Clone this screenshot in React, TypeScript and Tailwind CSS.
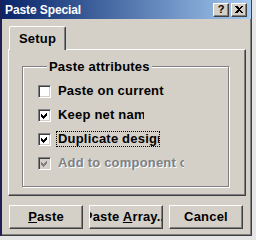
import React from 'react'

const raised =
  'border border-t-white border-l-white border-r-[#404040] border-b-[#404040] shadow-[inset_-1px_-1px_0_#808080,inset_1px_1px_0_#d4d0c8]'

function Check({ disabled }: { disabled?: boolean }) {
  return (
    <div
      className={`w-[13px] h-[13px] shrink-0 border border-t-[#808080] border-l-[#808080] border-r-white border-b-white shadow-[inset_1px_1px_0_#404040,inset_-1px_-1px_0_#d4d0c8] ${
        disabled ? 'bg-[#d4d0c8]' : 'bg-white'
      }`}
    />
  )
}

function CheckBox({
  label,
  checked,
  disabled,
  focused,
  width,
}: {
  label: string
  checked?: boolean
  disabled?: boolean
  focused?: boolean
  width?: string
}) {
  return (
    <div className="h-[24px] flex items-center gap-[6px]">
      <div className="relative w-[13px] h-[13px]">
        <Check disabled={disabled} />
        {checked && (
          <svg
            width="13"
            height="13"
            viewBox="0 0 13 13"
            className="absolute left-0 top-0"
            shapeRendering="crispEdges"
          >
            <path
              d="M3 5 L5 7 L9 3 L9 6 L5 10 L3 8 Z"
              fill={disabled ? '#808080' : '#000'}
            />
          </svg>
        )}
      </div>
      <div
        className={`whitespace-nowrap overflow-hidden text-[13px] font-bold tracking-[0.2px] leading-[14px] px-[1px] ${
          width ?? ''
        } ${
          disabled
            ? 'text-[#808080] [text-shadow:1px_1px_0_#fff]'
            : 'text-black'
        } ${focused ? 'outline outline-1 outline-dotted outline-black' : ''}`}
      >
        {label}
      </div>
    </div>
  )
}

function Button({ children }: { children: React.ReactNode }) {
  return (
    <div
      className={`w-[74px] h-[24px] flex items-center justify-center overflow-hidden whitespace-nowrap bg-[#d4d0c8] text-[13px] font-bold tracking-[0.2px] text-black ${raised}`}
    >
      <span className="shrink-0">{children}</span>
    </div>
  )
}

export default function App() {
  return (
    <div className="w-[256px] h-[240px] bg-[#e6e6e6] overflow-hidden font-['Liberation_Sans','Arial',sans-serif]">
      <div className="w-[252px] h-[236px] flex flex-col bg-[#d4d0c8] border-l-2 border-l-[#1e1e50] border-r border-b border-r-[#404040] border-b-[#404040] shadow-[inset_-1px_-1px_0_#808080]">
        {/* Title bar */}
        <div className="h-[19px] flex items-center justify-between pl-[3px] pr-[4px] bg-gradient-to-r from-[#0a246a] to-[#a6caf0]">
          <span className="text-white font-bold text-[12px] tracking-[-0.1px] leading-none">
            Paste Special
          </span>
          <div className="flex items-center gap-[2px]">
            <div className={`w-[16px] h-[14px] flex items-center justify-center bg-[#d4d0c8] text-[11px] font-bold leading-none ${raised}`}>
              ?
            </div>
            <div className={`w-[16px] h-[14px] flex items-center justify-center bg-[#d4d0c8] ${raised}`}>
              <svg width="8" height="7" viewBox="0 0 8 7" shapeRendering="crispEdges">
                <path d="M0 0h2l2 2l2-2h2l-3 3.5l3 3.5h-2l-2-2l-2 2h-2l3-3.5z" fill="#000" />
              </svg>
            </div>
          </div>
        </div>

        <div className="flex flex-col pl-[6px] pr-[5px] pt-[7px]">
          {/* Tab strip */}
          <div className="flex">
            <div className="relative z-10 ml-[1px] -mb-[1px] w-[57px] h-[24px] bg-[#d4d0c8] rounded-t-[2px] border-t border-l border-t-white border-l-white border-r border-r-[#404040] shadow-[inset_-1px_0_0_#808080] flex justify-center pt-[5px] text-[13px] font-bold tracking-[0.2px] leading-[14px]">
              Setup
            </div>
          </div>

          {/* Tab panel */}
          <div className="h-[147px] border-t border-l border-t-white border-l-white border-r border-b border-r-[#404040] border-b-[#404040] shadow-[inset_-1px_-1px_0_#808080] pl-[13px] pr-[14px] pt-[9px]">
            <fieldset className="w-[207px] h-[128px] border border-[#808080] shadow-[inset_1px_1px_0_#fff,1px_1px_0_#fff] pl-[15px] pt-[5px]">
              <legend className="relative ml-[9px] px-[2px] bg-[#d4d0c8] text-[13px] font-bold tracking-[0.2px] leading-[15px]">
                Paste attributes
              </legend>
              <CheckBox label="Paste on current" />
              <CheckBox label="Keep net names" checked width="w-[87px]" />
              <CheckBox label="Duplicate designators" checked focused width="w-[102px]" />
              <CheckBox label="Add to component class" checked disabled width="w-[127px]" />
            </fieldset>
          </div>

          {/* Buttons */}
          <div className="flex gap-[6px] mt-[9px] ml-[1px]">
            <Button>
              <span className="underline">P</span>aste
            </Button>
            <Button>
              Paste <span className="underline">A</span>rray...
            </Button>
            <Button>Cancel</Button>
          </div>
        </div>
      </div>
    </div>
  )
}
